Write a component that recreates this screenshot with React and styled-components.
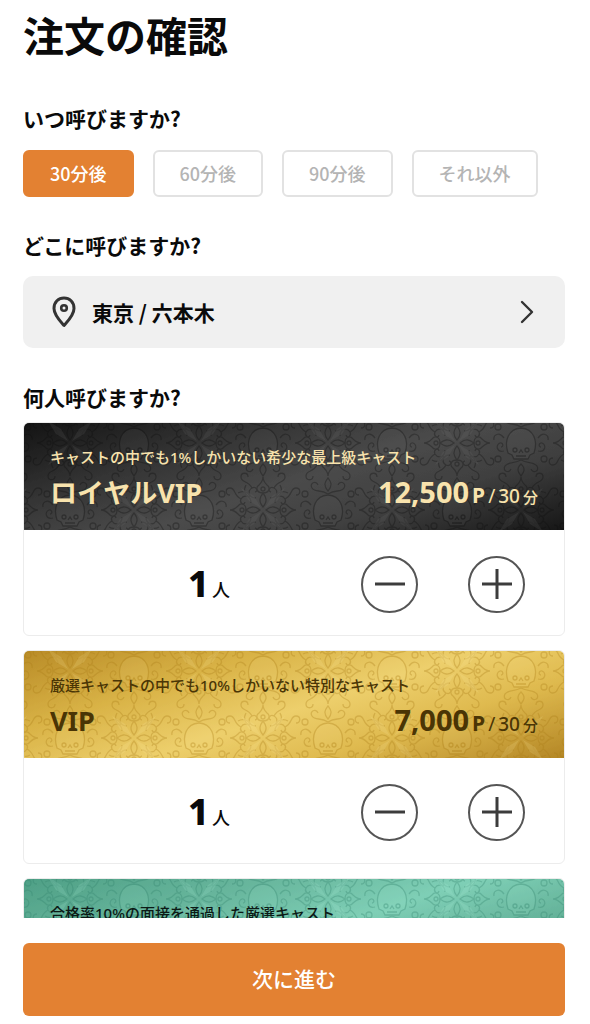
import { useState } from "react";
import styled, { createGlobalStyle } from "styled-components";

const times = ["30分後", "60分後", "90分後", "それ以外"];

const plans = [
    { id: "royal", name: "ロイヤルVIP", note: "キャストの中でも1%しかいない希少な最上級キャスト", price: "12,500" },
    { id: "vip", name: "VIP", note: "厳選キャストの中でも10%しかいない特別なキャスト", price: "7,000" },
    { id: "premium", note: "合格率10%の面接を通過した厳選キャスト" },
];

const themes = {
    royal: {
        text: "#f8e3ad",
        line: "#0c0c0c",
        fill: "#777777",
        background: "linear-gradient(162deg, #141414 0%, #353535 28%, #4b4b4b 52%, #404040 72%, #161616 100%)",
    },
    vip: {
        text: "#4a3505",
        line: "#a87a14",
        fill: "#fff0a8",
        background: "linear-gradient(162deg, #b98c28 0%, #d9b347 28%, #edcf6c 52%, #dfba4f 72%, #b48726 100%)",
    },
    premium: {
        text: "#0c1a16",
        line: "#30806a",
        fill: "#b4f5e0",
        background: "linear-gradient(162deg, #4fa086 0%, #68b69d 28%, #7fcfb6 52%, #68b69d 72%, #47957c 100%)",
    },
};

// one quarter of the flower, turned four times around its middle
const Petal = ({ angle }) => (
    <g transform={`rotate(${angle})`}>
        <path d="M0 -3 C-5 -9 -3 -13 0 -17 C3 -13 5 -9 0 -3Z" />
        <path d="M0 -17 C-6 -17 -8 -22 -4 -25 C-2 -27 0 -29 0 -33 C0 -29 2 -27 4 -25 C8 -22 6 -17 0 -17Z" />
        <path d="M-7 -12 C-14 -12 -16 -19 -11 -22 C-7 -24 -4 -19 -8 -18 M-11 -22 C-15 -30 -22 -27 -22 -33 C-22 -38 -15 -38 -15 -33" />
        <path d="M7 -12 C14 -12 16 -19 11 -22 C7 -24 4 -19 8 -18 M11 -22 C15 -30 22 -27 22 -33 C22 -38 15 -38 15 -33" />
        <path d="M-13 -13 C-18 -14 -20 -20 -17 -25 M13 -13 C18 -14 20 -20 17 -25" />
        <circle cy="-21" r="2" />
    </g>
);

const Damask = ({ id, line, fill }) => (
    <Ornament aria-hidden="true">
        <defs>
            <g id={`${id}-flower`}>
                <Petal angle={0} />
                <Petal angle={90} />
                <Petal angle={180} />
                <Petal angle={270} />
            </g>
            <g id={`${id}-crest`}>
                <path fill={fill} fillOpacity="0.3" d="M-13 10 C-17 -2 -13 -14 0 -15 C13 -14 17 -2 13 10 L9 12 L7 16 H-7 L-9 12Z" />
                <circle cx="-6" cy="7" r="2" />
                <circle cx="6" cy="7" r="2" />
                <path d="M-2 10 L0 7 L2 10 M-5 13 H5" />
                <path d="M0 -16 C-7 -21 -13 -17 -16 -22 C-19 -27 -12 -30 -10 -25 M0 -16 C7 -21 13 -17 16 -22 C19 -27 12 -30 10 -25" />
                <path d="M0 -19 C-5 -25 -3 -28 0 -32 C3 -28 5 -25 0 -19Z" />
                <path d="M0 17 C-7 21 -12 18 -16 23 C-19 28 -12 31 -10 26 M0 17 C7 21 12 18 16 23 C19 28 12 31 10 26" />
                <path d="M0 21 C-5 26 -3 29 0 33 C3 29 5 26 0 21Z" />
                <path d="M-17 8 C-24 10 -26 2 -21 0 C-18 -1 -17 4 -20 4 M-17 -5 C-22 -12 -28 -8 -27 -3 M17 8 C24 10 26 2 21 0 C18 -1 17 4 20 4 M17 -5 C22 -12 28 -8 27 -3" />
                <circle cx="-23" cy="-16" r="3" />
                <circle cx="23" cy="-16" r="3" />
                <circle cx="-23" cy="16" r="3" />
                <circle cx="23" cy="16" r="3" />
            </g>
            <pattern id={`${id}-damask`} x="46" y="20" width="129" height="134" patternUnits="userSpaceOnUse">
                <g fill="none" stroke={line} strokeWidth="1.3">
                    <use href={`#${id}-flower`} x="0" y="0" />
                    <use href={`#${id}-flower`} x="129" y="0" />
                    <use href={`#${id}-flower`} x="0" y="134" />
                    <use href={`#${id}-flower`} x="129" y="134" />
                    <use href={`#${id}-flower`} x="64" y="67" />
                    <use href={`#${id}-crest`} x="64" y="0" />
                    <use href={`#${id}-crest`} x="64" y="134" />
                    <use href={`#${id}-crest`} x="0" y="67" />
                    <use href={`#${id}-crest`} x="129" y="67" />
                </g>
                <g fill={fill} fillOpacity="0.5">
                    <path d="M2 2 L14 9 L22 22 L9 14Z M127 2 L115 9 L107 22 L120 14Z M2 132 L14 125 L22 112 L9 120Z M127 132 L115 125 L107 112 L120 120Z" />
                    <path d="M62 65 L50 58 L42 45 L55 53Z M66 65 L78 58 L86 45 L73 53Z M62 69 L50 76 L42 89 L55 81Z M66 69 L78 76 L86 89 L73 81Z" />
                </g>
            </pattern>
        </defs>
        <rect width="100%" height="100%" fill={`url(#${id}-damask)`} />
    </Ornament>
);

const PlanCard = ({ plan }) => {
    const [count, setCount] = useState(1);
    const theme = themes[plan.id];

    return(
        <Card>
            <CardHead $background={theme.background} $text={theme.text}>
                <Damask id={plan.id} line={theme.line} fill={theme.fill} />
                <Note>{plan.note}</Note>
                {plan.name && (
                    <PlanLine>
                        <PlanName>{plan.name}</PlanName>
                        <Price>
                            <Amount>{plan.price}</Amount>
                            <Point>P</Point>
                            <Slash>/</Slash>
                            <Minutes>30</Minutes>
                            <Unit>分</Unit>
                        </Price>
                    </PlanLine>
                )}
            </CardHead>
            {plan.name && (
                <CardBody>
                    <Count>
                        <Number>{count}</Number>
                        <Person>人</Person>
                    </Count>
                    <RoundButton type="button" aria-label="減らす" onClick={() => setCount(Math.max(0, count - 1))}>
                        <svg width="32" height="32" viewBox="0 0 32 32" stroke="#3c3c3c" strokeWidth="3">
                            <path d="M1 16 H31" />
                        </svg>
                    </RoundButton>
                    <RoundButton type="button" aria-label="増やす" onClick={() => setCount(count + 1)}>
                        <svg width="32" height="32" viewBox="0 0 32 32" stroke="#3c3c3c" strokeWidth="3">
                            <path d="M1 16 H31 M16 1 V31" />
                        </svg>
                    </RoundButton>
                </CardBody>
            )}
        </Card>
    );
}

const App = () => {
    const [time, setTime] = useState(times[0]);

    return(
        <Page>
            <GlobalStyle />
            <Scroll>
                <Title>注文の確認</Title>
                <Label>いつ呼びますか?</Label>
                <Times>
                    {times.map((item) => (
                        <TimeButton key={item} type="button" $active={item === time} aria-pressed={item === time} onClick={() => setTime(item)}>
                            {item}
                        </TimeButton>
                    ))}
                </Times>
                <Label>どこに呼びますか?</Label>
                <Place type="button">
                    <svg width="24" height="32" viewBox="0 0 24 32" fill="none" stroke="#333" strokeWidth="3">
                        <path d="M12 29.5 C8 25 2 19 2 12.5 C2 6 6.5 2 12 2 C17.5 2 22 6 22 12.5 C22 19 16 25 12 29.5Z" strokeLinejoin="round" />
                        <circle cx="12" cy="12" r="2.8" strokeWidth="2.6" />
                    </svg>
                    <PlaceName>東京 / 六本木</PlaceName>
                    <svg width="14" height="24" viewBox="0 0 14 24" fill="none" stroke="#333" strokeWidth="2.4">
                        <path d="M2 2 L12 12 L2 22" strokeLinecap="round" strokeLinejoin="round" />
                    </svg>
                </Place>
                <Label>何人呼びますか?</Label>
                <Cards>
                    {plans.map((plan) => (
                        <PlanCard key={plan.id} plan={plan} />
                    ))}
                </Cards>
            </Scroll>
            <Footer>
                <NextButton type="button">次に進む</NextButton>
            </Footer>
        </Page>
    );
}

const GlobalStyle = createGlobalStyle`
    * {
        box-sizing: border-box;
    }

    body {
        margin: 0;
        background: #fff;
        color: #0a0a0a;
    }

    body, button {
        font-family: "Noto Sans CJK JP", sans-serif;
    }

    button {
        cursor: pointer;
    }
`;

const Page = styled.main`
    display: flex;
    flex-direction: column;
    height: 100vh;
`;

const Scroll = styled.div`
    flex: 1;
    min-height: 0;
    overflow-y: auto;
    scrollbar-width: none;
    padding: 12px 25px 0 23px;
`;

const Title = styled.h1`
    margin: 0 0 48px;
    font-size: 41px;
    line-height: 44px;
    font-weight: 600;
`;

const Label = styled.h2`
    margin: 0;
    font-size: 21px;
    line-height: 28px;
    font-weight: 600;
`;

const Times = styled.div`
    display: flex;
    flex-wrap: wrap;
    gap: 19px;
    margin: 18px 0 34px;
`;

const TimeButton = styled.button`
    height: 47px;
    padding: 0 25px 2px;
    border: 2px solid ${(props) => (props.$active ? "#e38132" : "#e2e2e2")};
    border-radius: 6px;
    background: ${(props) => (props.$active ? "#e38132" : "#fff")};
    color: ${(props) => (props.$active ? "#fff" : "#b4b4b4")};
    font-size: 18px;
    line-height: 24px;
    font-weight: 500;
`;

const Place = styled.button`
    display: flex;
    align-items: center;
    width: 100%;
    height: 72px;
    margin: 17px 0 35px;
    padding: 0 31px 0 29px;
    border: 0;
    border-radius: 10px;
    background: #f0f0f0;
    color: #0a0a0a;
`;

const PlaceName = styled.span`
    flex: 1;
    margin-left: 16px;
    text-align: left;
    font-size: 21px;
    line-height: 28px;
    font-weight: 600;
`;

const Cards = styled.div`
    display: flex;
    flex-direction: column;
    gap: 14px;
    margin-top: 11px;
`;

const Card = styled.section`
    border: 1px solid #ececec;
    border-radius: 6px;
    overflow: hidden;
`;

const CardHead = styled.header`
    position: relative;
    height: 107px;
    padding: 24px 26px 0;
    background: ${(props) => props.$background};
    color: ${(props) => props.$text};
    font-family: "Noto Sans", "Noto Sans CJK JP", sans-serif;
`;

const Ornament = styled.svg`
    position: absolute;
    top: 0;
    left: 0;
    width: 100%;
    height: 100%;
    opacity: 0.3;
`;

const Note = styled.p`
    position: relative;
    margin: 0 0 8px;
    font-size: 15px;
    line-height: 20px;
    font-weight: 500;
`;

const PlanLine = styled.div`
    position: relative;
    display: flex;
    justify-content: space-between;
    align-items: baseline;
    line-height: 34px;
`;

const PlanName = styled.h3`
    margin: 0;
    font-size: 27px;
    font-weight: 700;
`;

const Price = styled.div`
    display: flex;
    align-items: baseline;
    gap: 3px;
`;

const Amount = styled.span`
    font-size: 29px;
    font-weight: 700;
`;

const Point = styled.span`
    font-size: 21px;
    font-weight: 700;
`;

const Slash = styled.span`
    font-size: 19px;
`;

const Minutes = styled.span`
    font-size: 19px;
    font-weight: 500;
`;

const Unit = styled.span`
    font-size: 15px;
    font-weight: 500;
`;

const CardBody = styled.div`
    display: flex;
    align-items: center;
    gap: 50px;
    height: 105px;
    padding: 3px 39px 0 33px;
`;

const Count = styled.output`
    flex: 1;
    display: flex;
    justify-content: center;
    align-items: baseline;
    gap: 3px;
    margin-right: -50px;
    font-family: "Noto Sans", "Noto Sans CJK JP", sans-serif;
`;

const Number = styled.span`
    font-size: 36px;
    line-height: 44px;
    font-weight: 800;
`;

const Person = styled.span`
    font-size: 18px;
    font-weight: 500;
`;

const RoundButton = styled.button`
    display: flex;
    justify-content: center;
    align-items: center;
    width: 57px;
    height: 57px;
    padding: 0;
    border: 2px solid #555;
    border-radius: 50%;
    background: #fff;
`;

const Footer = styled.footer`
    padding: 25px 25px 8px 23px;
`;

const NextButton = styled.button`
    width: 100%;
    height: 73px;
    padding-bottom: 4px;
    border: 0;
    border-radius: 6px;
    background: #e38132;
    color: #fff;
    font-size: 21px;
    line-height: 28px;
    font-weight: 500;
`;

export default App;
